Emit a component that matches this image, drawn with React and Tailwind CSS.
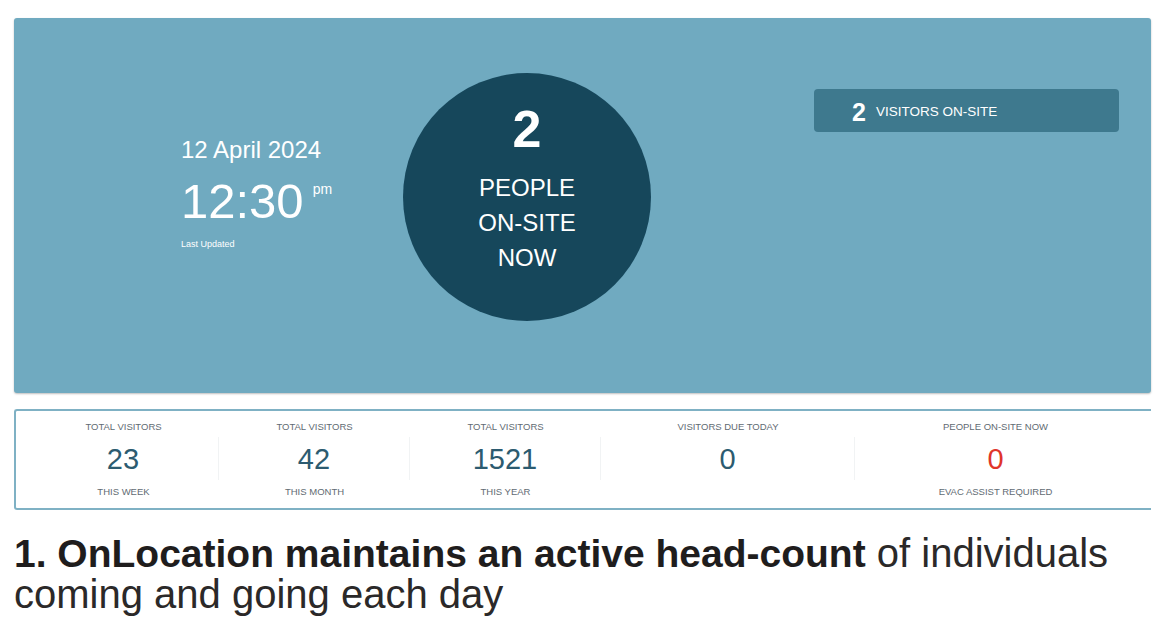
const stats = [
  { label: 'TOTAL VISITORS', value: '23', sub: 'THIS WEEK', width: 'w-[191px]' },
  { label: 'TOTAL VISITORS', value: '42', sub: 'THIS MONTH', width: 'w-[191px]' },
  { label: 'TOTAL VISITORS', value: '1521', sub: 'THIS YEAR', width: 'w-[191px]' },
  { label: 'VISITORS DUE TODAY', value: '0', sub: '', width: 'w-[254px]' },
  { label: 'PEOPLE ON-SITE NOW', value: '0', sub: 'EVAC ASSIST REQUIRED', width: 'flex-1', alert: true },
];

export default function App() {
  return (
    <div className="w-[1171px] h-[631px] bg-white overflow-hidden" style={{ fontFamily: '"Liberation Sans", Arial, sans-serif' }}>
      {/* Panel utama */}
      <div className="ml-[14px] mt-[18px] w-[1137px] h-[375px] bg-[#70aac0] rounded-[3px] shadow-[0_1px_2px_rgba(0,0,0,0.25)] flex items-start">
        <div className="ml-[167px] mt-[118px] w-[222px] text-white">
          <div className="text-[24px] leading-[28px]">12 April 2024</div>
          <div className="mt-[13px] flex items-start">
            <span className="text-[49px] leading-[49px]">12:30</span>
            <span className="ml-[9px] mt-[5px] text-[14px] leading-[14px]">pm</span>
          </div>
          <div className="mt-[13px] text-[9px] leading-[11px]">Last Updated</div>
        </div>

        <div className="mt-[55px] w-[248px] h-[248px] rounded-full bg-[#16475b] text-white flex flex-col items-center pt-[30px]">
          <div className="text-[52px] leading-[52px] font-bold">2</div>
          <div className="mt-[15px] text-[24px] leading-[35px] text-center">
            <div>PEOPLE</div>
            <div>ON-SITE</div>
            <div>NOW</div>
          </div>
        </div>

        <div className="ml-[163px] mt-[71px] w-[305px] h-[43px] rounded-[4px] bg-[#3e798e] text-white flex items-center pl-[38px] pt-[3px]">
          <span className="text-[25px] leading-none font-bold">2</span>
          <span className="ml-[10px] text-[13.5px] leading-none">VISITORS ON-SITE</span>
        </div>
      </div>

      {/* Ringkasan statistik */}
      <div className="ml-[14px] mt-[16px] w-[1137px] h-[101px] border-2 border-r-0 border-[#7fb1c4] rounded-l-[3px] flex pl-[12px] pr-[15px]">
        {stats.map((s, i) => (
          <div key={i} className={`${s.width} flex flex-col items-center pt-[10px]`}>
            <div className="text-[9.5px] leading-[12px] text-[#5f6b73]">{s.label}</div>
            <div className={`mt-[4px] w-full h-[43px] flex items-center justify-center ${i < 4 ? 'border-r border-[#f1f3f4]' : ''}`}>
              <span className={`text-[29px] leading-[36px] ${s.alert ? 'text-[#e0352a]' : 'text-[#2c5b70]'}`}>{s.value}</span>
            </div>
            <div className="mt-[6px] text-[9.5px] leading-[12px] text-[#5f6b73]">{s.sub}</div>
          </div>
        ))}
      </div>

      <p className="px-[14px] mt-[23px] text-[39px] leading-[41px] text-[#1f1d1d]">
        <span className="font-bold">1. OnLocation maintains an active head-count</span>
        <span className="text-[40px] text-[#2b2929]"> of individuals</span>
        <br />
        <span className="text-[40px] text-[#2b2929]">coming and going each day</span>
      </p>
    </div>
  );
}
